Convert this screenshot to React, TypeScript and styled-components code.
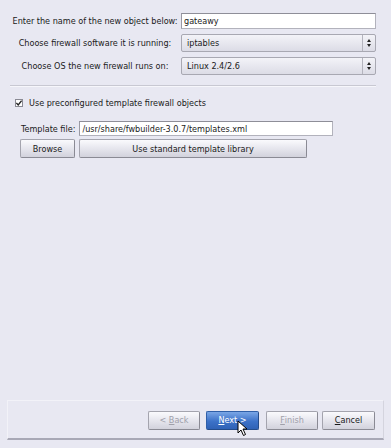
import styled, { createGlobalStyle } from 'styled-components';

const GlobalStyle = createGlobalStyle`
  html, body {
    margin: 0;
    padding: 0;
    background: #e8e8f2;
  }
  body {
    font-family: "DejaVu Sans Condensed", "DejaVu Sans", "Liberation Sans", sans-serif;
    font-size: 9px;
    color: #1a1a1a;
  }
`;

const App = () => {
  return (
    <>
      <GlobalStyle />
      <Page>
        <FormGrid>
          <Label>Enter the name of the new object below:</Label>
          <TextField defaultValue="gateawy" />
          <Label>Choose firewall software it is running:</Label>
          <Select>
            <SelectText>iptables</SelectText>
            <Spinner><ArrowUp /><ArrowDown /></Spinner>
          </Select>
          <Label>Choose OS the new firewall runs on:</Label>
          <Select>
            <SelectText>Linux 2.4/2.6</SelectText>
            <Spinner><ArrowUp /><ArrowDown /></Spinner>
          </Select>
        </FormGrid>

        <Separator />

        <CheckRow>
          <CheckBox>
            <svg width="6" height="6" viewBox="0 0 6 6">
              <path d="M0.4 3 L2.2 5 L5.6 0.6" stroke="#222" strokeWidth="1.3" fill="none" />
            </svg>
          </CheckBox>
          <span>Use preconfigured template firewall objects</span>
        </CheckRow>

        <TemplateBlock>
          <TemplateRow>
            <span>Template file:</span>
            <PathField defaultValue="/usr/share/fwbuilder-3.0.7/templates.xml" />
          </TemplateRow>
          <TemplateRow>
            <Button $width={55}>Browse</Button>
            <Button $width={228}>Use standard template library</Button>
          </TemplateRow>
        </TemplateBlock>

        <Spacer />

        <Footer>
          <Button $width={52} $gap={6} $disabled>{'< '}<u>B</u>ack</Button>
          <NextWrap>
            <Button $width={53} $gap={7} $primary>
              <u>N</u>ext{' >'}
            </Button>
            <Cursor>
              <svg width="12" height="17" viewBox="0 0 12 17">
                <path d="M1 1 L1 13 L4 10 L6.5 15.5 L8.5 14.5 L6 9 L10 9 Z" fill="#fff" stroke="#000" strokeWidth="1" />
              </svg>
            </Cursor>
          </NextWrap>
          <Button $width={52} $gap={4} $disabled><u>F</u>inish</Button>
          <Button $width={53}><u>C</u>ancel</Button>
        </Footer>
        <BottomGap />
      </Page>
    </>
  );
};

export default App;

const Page = styled.div`
  width: 391px;
  height: 448px;
  display: flex;
  flex-direction: column;
  box-sizing: border-box;
  padding-top: 13px;
  overflow: hidden;
`;

const FormGrid = styled.div`
  display: grid;
  grid-template-columns: 171px 195px;
  grid-auto-rows: auto;
  row-gap: 5px;
  padding-left: 10px;
  align-items: center;
`;

const Label = styled.div`
  text-align: center;
  white-space: nowrap;
  padding-right: 1px;
`;

const TextField = styled.input`
  box-sizing: border-box;
  height: 16px;
  width: 195px;
  border: 1px solid #b2b2bc;
  border-top-color: #8e8e98;
  border-left-color: #9a9aa4;
  background: #fff;
  font: inherit;
  padding: 0 2px;
  margin: 0;
  color: #1a1a1a;
  outline: none;
`;

const PathField = styled(TextField)`
  width: 254px;
  height: 15px;
`;

const Select = styled.div`
  box-sizing: border-box;
  height: 18px;
  display: flex;
  align-items: stretch;
  border: 1px solid #a8a8b2;
  border-radius: 2px;
  background: linear-gradient(#f3f3f8, #dcdce6);
`;

const SelectText = styled.div`
  flex: 1;
  display: flex;
  align-items: center;
  padding-left: 5px;
`;

const Spinner = styled.div`
  width: 12px;
  border-left: 1px solid #b4b4be;
  display: flex;
  flex-direction: column;
  align-items: center;
  justify-content: center;
  gap: 2px;
`;

const ArrowUp = styled.div`
  width: 0;
  height: 0;
  border-left: 2.5px solid transparent;
  border-right: 2.5px solid transparent;
  border-bottom: 3px solid #222;
`;

const ArrowDown = styled.div`
  width: 0;
  height: 0;
  border-left: 2.5px solid transparent;
  border-right: 2.5px solid transparent;
  border-top: 3px solid #222;
`;

const Separator = styled.div`
  margin: 10px 15px 0 10px;
  height: 0;
  border-top: 1px solid #c8c8d2;
  border-bottom: 1px solid #f6f6fb;
`;

const CheckRow = styled.div`
  display: flex;
  align-items: center;
  gap: 6px;
  padding-left: 15px;
  margin-top: 11px;
`;

const CheckBox = styled.div`
  box-sizing: border-box;
  width: 8px;
  height: 8px;
  border: 1px solid #8a8a94;
  background: #fff;
  display: flex;
  align-items: center;
  justify-content: center;
`;

const TemplateBlock = styled.div`
  display: flex;
  flex-direction: column;
  gap: 3px;
  padding-left: 20px;
  margin-top: 13px;
`;

const TemplateRow = styled.div`
  display: flex;
  align-items: center;
  gap: 4px;
  & > span {
    padding-left: 1px;
  }
`;

const Button = styled.div<{ $width: number; $gap?: number; $primary?: boolean; $disabled?: boolean }>`
  box-sizing: border-box;
  width: ${p => p.$width}px;
  height: 19px;
  margin-right: ${p => p.$gap ?? 0}px;
  display: flex;
  align-items: center;
  justify-content: center;
  border: 1px solid ${p => (p.$primary ? '#2f5fa8' : '#a4a4ae')};
  border-right-color: ${p => (p.$primary ? '#244c8a' : '#8a8a94')};
  border-bottom-color: ${p => (p.$primary ? '#244c8a' : '#8a8a94')};
  border-radius: 2px;
  background: ${p =>
    p.$primary
      ? 'linear-gradient(#7aa6e6, #3c72c8 55%, #2f62b6)'
      : 'linear-gradient(#fafafd, #e4e4ec 55%, #d2d2dc)'};
  color: ${p => (p.$primary ? '#fff' : p.$disabled ? '#a0a0aa' : '#1a1a1a')};
  white-space: pre;
  u {
    text-decoration: underline;
  }
`;

const Spacer = styled.div`
  flex: 1;
`;

const Footer = styled.div`
  margin: 0 7px 0 7px;
  height: 40px;
  box-sizing: border-box;
  border: 1px solid #f2f2f8;
  border-bottom: 2px solid #a8a8b6;
  border-right-color: #d4d4de;
  display: flex;
  align-items: center;
  justify-content: flex-end;
  padding-right: 8px;
  padding-top: 1px;
`;

const NextWrap = styled.div`
  position: relative;
  display: flex;
`;

const Cursor = styled.div`
  position: absolute;
  left: 31px;
  top: 9px;
  line-height: 0;
`;

const BottomGap = styled.div`
  height: 8px;
`;
